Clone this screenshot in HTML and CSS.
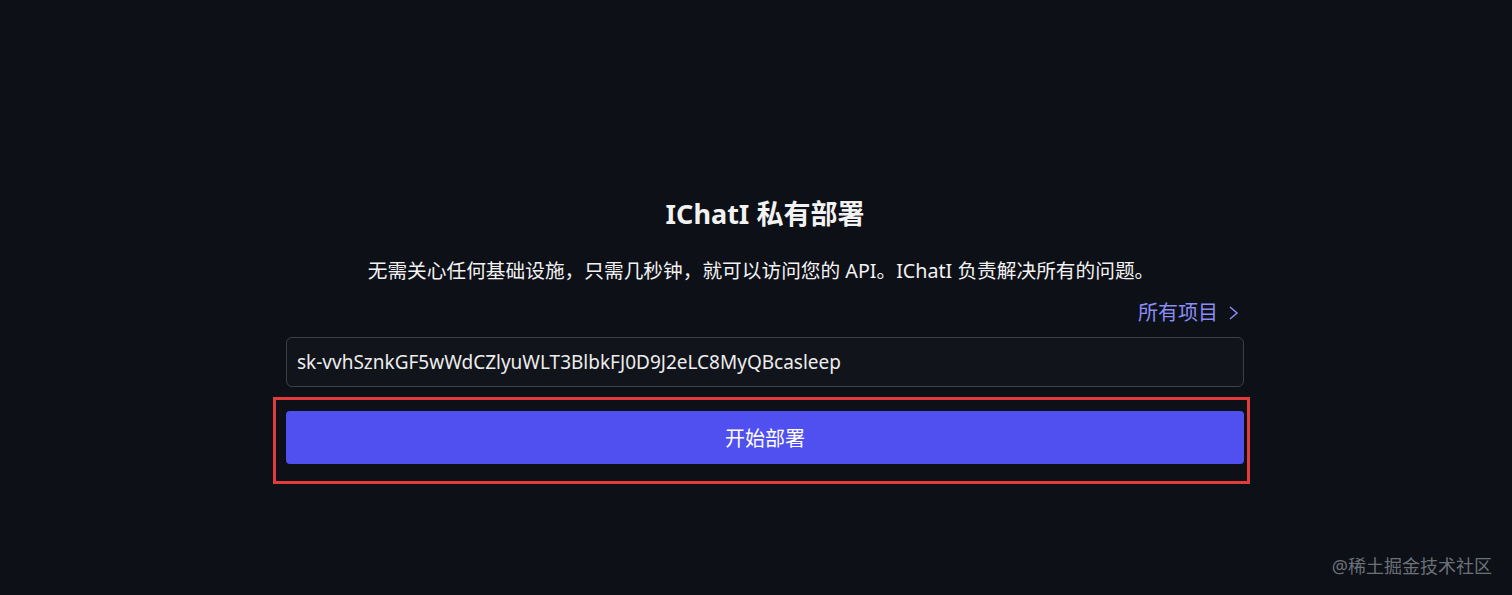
FILE: index.html
```html
<!DOCTYPE html>
<html lang="zh-CN">
<head>
  <meta charset="UTF-8" />
  <meta name="viewport" content="width=device-width, initial-scale=1.0"/>
  <title>IChatI 私有部署</title>
  <link rel="stylesheet" href="styles.css">
</head>
<body>
  <div class="page">
    <div class="panel">
      <h1>IChatI 私有部署</h1>
      <p class="lead">无需关心任何基础设施，只需几秒钟，就可以访问您的 API。IChatI 负责解决所有的问题。</p>
      <div class="links">
        <a href="#" class="all-projects">所有项目
          <svg width="14" height="16" viewBox="0 0 14 16" fill="none" stroke="currentColor" stroke-width="1.5">
            <path d="M4 2l7 6-7 6"/>
          </svg>
        </a>
      </div>
      <input type="text" class="key-input" value="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" />
      <div class="deploy-frame">
        <button class="deploy-btn">开始部署</button>
      </div>
    </div>
  </div>
  <div class="watermark">@稀土掘金技术社区</div>
</body>
</html>
```

FILE: styles.css
```css
body {
  margin: 0;
  background-color: #0d1017;
  color: #f2f2f2;
  font-family: "Noto Sans", "Noto Sans CJK SC", sans-serif;
}

.page {
  height: 595px;
  box-sizing: border-box;
  padding: 196px 0 0 18px;
  display: flex;
  justify-content: center;
}

.panel {
  width: 958px;
  display: flex;
  flex-direction: column;
}

h1 {
  margin: 0;
  font-size: 27px;
  line-height: 36px;
  font-weight: 700;
  text-align: center;
}

.lead {
  margin: 25px 0 0;
  font-size: 19.7px;
  line-height: 28px;
  text-align: center;
  padding-right: 8px;
}

.links {
  margin-top: 14px;
  display: flex;
  justify-content: flex-end;
  padding-right: 4px;
}

.all-projects {
  display: flex;
  align-items: center;
  gap: 8px;
  color: #8b8cf6;
  text-decoration: none;
  font-size: 20px;
  line-height: 28px;
}

.key-input {
  margin-top: 10px;
  height: 50px;
  box-sizing: border-box;
  padding: 0 10px;
  background-color: #11141b;
  border: 1px solid #3b404c;
  border-radius: 6px;
  color: #ededed;
  font-family: inherit;
  font-size: 19px;
  outline: none;
}

/* red annotation frame */
.deploy-frame {
  margin: 10px -6px 0 -13px;
  border: 3px solid #e23b3b;
  padding: 11px 3px 17px 10px;
}

.deploy-btn {
  width: 100%;
  height: 53px;
  display: block;
  background-color: #5050f0;
  color: #ffffff;
  border: none;
  border-radius: 4px;
  font-family: inherit;
  font-size: 20px;
  cursor: pointer;
}

.watermark {
  position: absolute;
  right: 20px;
  bottom: 17px;
  color: #6c7078;
  font-size: 18px;
}
```
